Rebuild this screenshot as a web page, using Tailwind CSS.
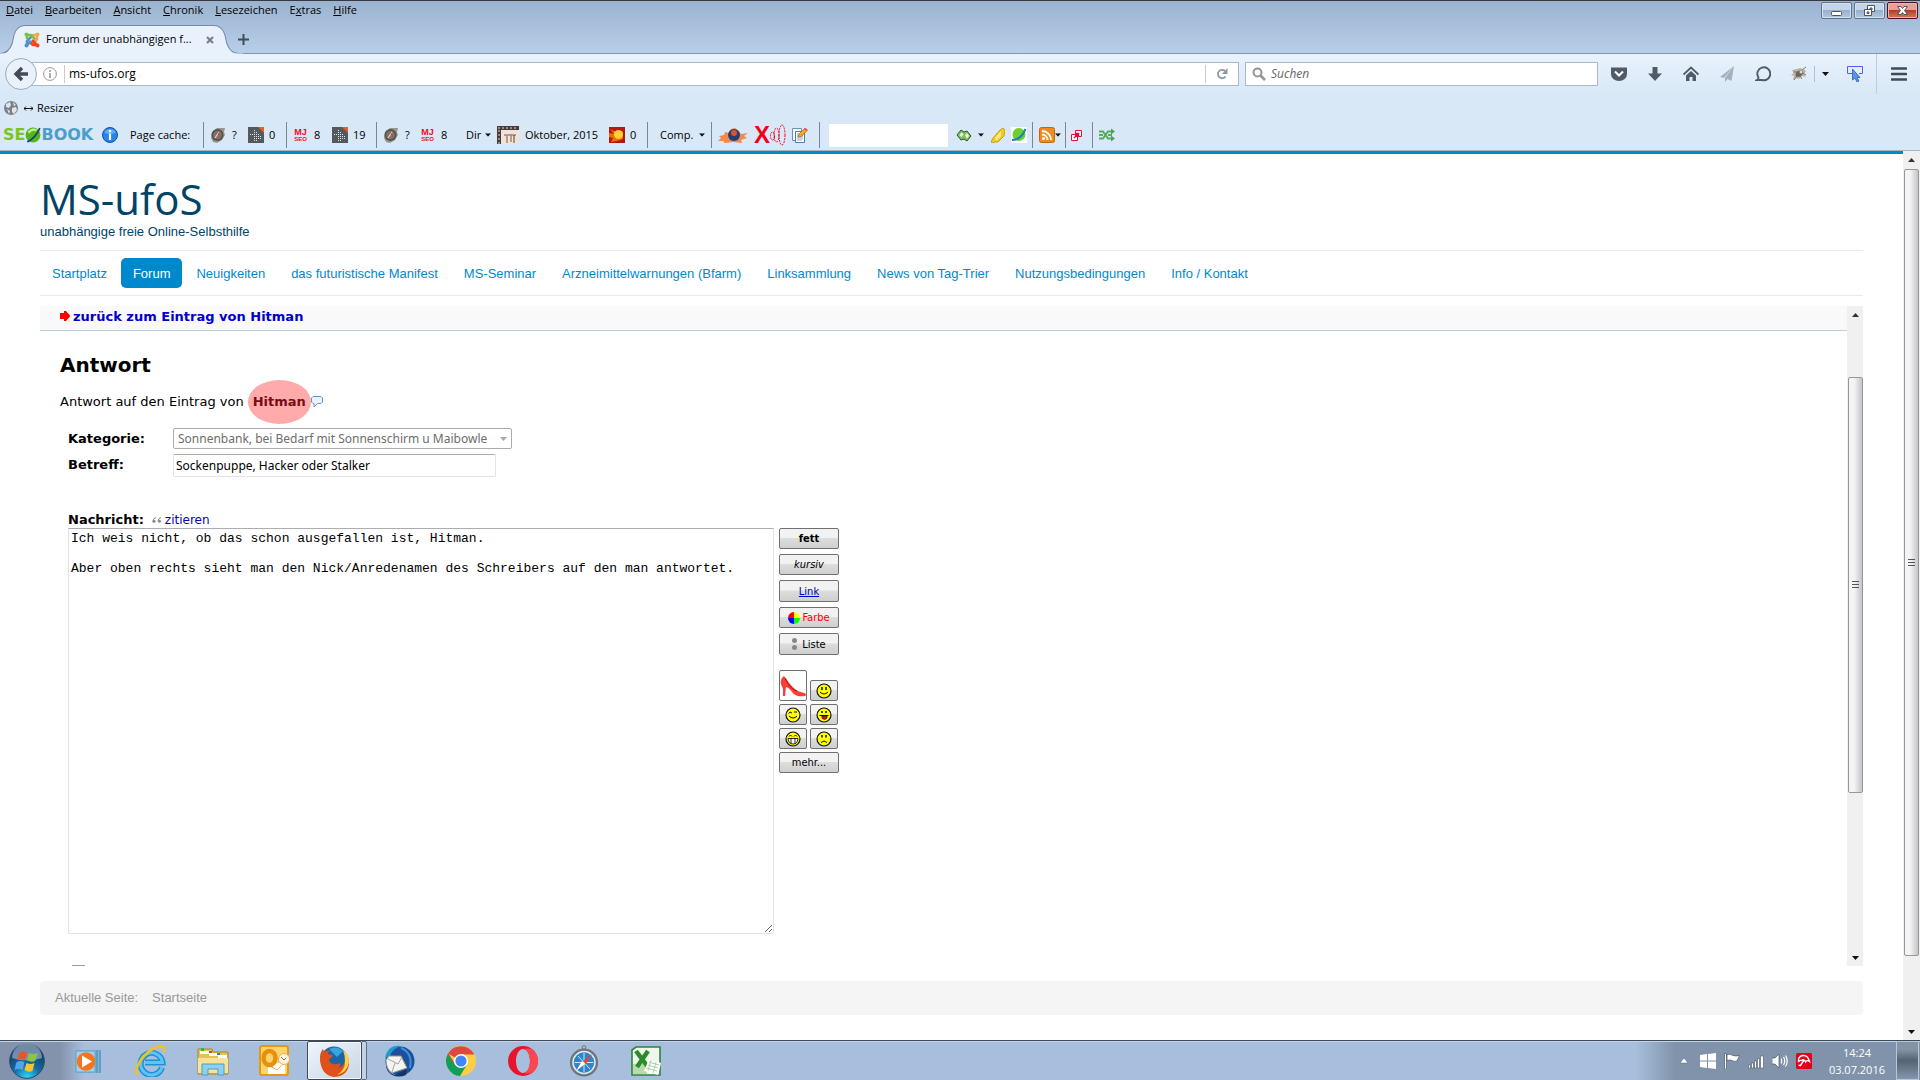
<!DOCTYPE html>
<html lang="de">
<head>
    <meta charset="UTF-8">
    <meta name="viewport" content="width=device-width, initial-scale=1.0">
    <title>Forum der unabhängigen freien Online-Selbsthilfe</title>
    <script src="https://cdn.jsdelivr.net/npm/@tailwindcss/browser@4"></script>
</head>
<body class="h-screen flex flex-col overflow-hidden bg-white text-black font-['Open_Sans','Noto_Sans',sans-serif] text-[11px]">

    <!-- Shared icons -->
    <svg class="hidden">
        <symbol id="caret" viewBox="0 0 7 4"><path d="M0 0h7L3.500 4z" fill="#111"/></symbol>
        <symbol id="gauge" viewBox="0 0 16 16">
            <path d="M1 11 2 5 7 1l8 0-1 4 1 3-3 5-5 3-4-1z" fill="#96968f"/>
            <circle cx="7.500" cy="8" r="6" fill="#55524c"/><circle cx="7.500" cy="8" r="4.300" fill="#857068"/>
            <path d="M5 11 9 5" fill="none" stroke="#ddd5cf" stroke-width="1.200"/><path d="M8 6l2 4" stroke="#b5493b"/>
        </symbol>
        <symbol id="dots" viewBox="0 0 16 16">
            <path d="M0 0h16v16H0z" fill="#53595d"/><path d="M10 0h6v6z" fill="#f15a24"/>
            <path d="M6.500 3v11M8.500 5v9M10.500 7v6M12.500 9v3M4.500 7v2M2.500 7v2" stroke="#e2e5e6" stroke-dasharray="1 1"/>
        </symbol>
        <symbol id="face" viewBox="0 0 16 16">
            <circle cx="8" cy="8" r="7" fill="#ff0" stroke="#111" stroke-width="1.200"/>
        </symbol>
    </svg>

    <header class="shrink-0 bg-[#d9e8f7]">
        <!-- Menu, window buttons and tabs -->
        <div class="h-[54px] border-t border-t-[#38383d] border-b border-b-[#7f98b5] bg-linear-to-b from-[#9ab3d0] to-[#b9cfe9]">
            <div class="flex h-6 justify-between">
                <nav class="flex h-[18px] items-center gap-3 pl-[6px]">
                    <a href="#"><u>D</u>atei</a>
                    <a href="#"><u>B</u>earbeiten</a>
                    <a href="#"><u>A</u>nsicht</a>
                    <a href="#"><u>C</u>hronik</a>
                    <a href="#"><u>L</u>esezeichen</a>
                    <a href="#">E<u>x</u>tras</a>
                    <a href="#"><u>H</u>ilfe</a>
                </nav>
                <div class="flex gap-[2px] pt-px pr-[2px]">
                    <button aria-label="Minimieren" class="grid h-[17px] w-[31px] place-items-center rounded-[2px] border border-[#5f7592] bg-linear-to-b from-[#c4d5e8] from-45% via-[#98b0cc] via-50% to-[#b4cae2] shadow-[inset_0_0_0_1px_#d4e2f0]">
                        <svg class="h-[13px] w-[13px]" viewBox="0 0 13 13"><rect x="1.500" y="7.500" width="10" height="4" rx="1" fill="#fff" stroke="#4c5566"/></svg>
                    </button>
                    <button aria-label="Verkleinern" class="grid h-[17px] w-[31px] place-items-center rounded-[2px] border border-[#5f7592] bg-linear-to-b from-[#c4d5e8] from-45% via-[#98b0cc] via-50% to-[#b4cae2] shadow-[inset_0_0_0_1px_#d4e2f0]">
                        <svg class="h-[13px] w-[13px]" viewBox="0 0 13 13"><path d="M4.500 1.500h7v6h-7z" fill="#fff" stroke="#4c5566"/><path d="M7 4h2v2H7z" fill="#8aa0bd" stroke="#4c5566"/><path d="M1.500 5.500h7v6h-7z" fill="#fff" stroke="#4c5566"/><path d="M4 8h2v1.500H4z" fill="#8aa0bd" stroke="#4c5566"/></svg>
                    </button>
                    <button aria-label="Schließen" class="grid h-[17px] w-[31px] place-items-center rounded-[2px] border border-[#4b1222] bg-linear-to-b from-[#e5a193] from-45% via-[#b93a24] via-50% to-[#d4785f] shadow-[inset_0_0_0_1px_#eab5aa]">
                        <svg class="h-[13px] w-[13px]" viewBox="0 0 13 13"><path d="M1.500 2.500h3.500l1.500 2 1.500-2h3.500L8.500 6.500l3 4H8l-1.500-2-1.500 2H1.500l3-4z" fill="#fff" stroke="#4c5566"/></svg>
                    </button>
                </div>
            </div>
            <div class="flex h-[29px] items-center">
                <div class="relative flex h-full w-[236px] items-center pl-6">
                    <svg class="absolute left-0 top-0 h-[29px] w-[243px]" viewBox="0 0 240 29" preserveAspectRatio="none">
                        <path d="M-1 28.500H0c7 0 10-4 12-10l2-9C16 3 19 .5 25 .5h186c6 0 9 3 11 9l2 9c2 6 5 10 13 10h3V30H-1z" fill="#e9f2fc" stroke="#6f8cad"/>
                        <path d="M0 29.500h240" stroke="#e9f2fc" stroke-width="2"/>
                    </svg>
                    <svg class="relative h-4 w-4" viewBox="0 0 16 16" fill="none" stroke-width="2.600">
                        <path d="M3 13V9l6-6" stroke="#5091cd"/><path d="M3 3h4l6 6" stroke="#7ac143"/><path d="M13 3v4l-6 6" stroke="#f9a541"/><path d="M13 13H9L6 10" stroke="#f44321"/><path d="M8 8l5 5" stroke="#f44321"/><path d="M3 7V3" stroke="#7ac143"/><path d="M9 3h4" stroke="#f9a541"/><path d="M3 13l4-4" stroke="#5091cd"/>
                        <g stroke="none"><circle cx="2.500" cy="2.500" r="2" fill="#7ac143"/><circle cx="13.500" cy="2.500" r="2" fill="#f9a541"/><circle cx="13.500" cy="13.500" r="2" fill="#f44321"/><circle cx="2.500" cy="13.500" r="2" fill="#5091cd"/></g>
                    </svg>
                    <span class="relative w-[166px] pl-[6px] whitespace-nowrap">Forum der unabhängigen f...</span>
                    <button aria-label="Tab schließen" class="relative"><svg class="h-2 w-2" viewBox="0 0 8 8"><path d="M1 1l6 6M7 1 1 7" stroke="#75818e" stroke-width="2.200"/></svg></button>
                </div>
                <button aria-label="Neuer Tab"><svg class="h-[11px] w-[13px] pl-[2px]" viewBox="0 0 11 11"><path d="M5.500 0v11M0 5.500h11" stroke="#3f4d5d" stroke-width="2"/></svg></button>
            </div>
        </div>

        <!-- Address bar -->
        <div class="flex h-10 items-center bg-linear-to-b from-[#e9f2fc] to-[#d9e8f7] pl-[5px]">
            <button aria-label="Zurück" class="z-10 grid h-8 w-8 shrink-0 place-items-center rounded-full border border-[#98abc0] bg-[#e9f2fb]">
                <svg class="h-4 w-4" viewBox="0 0 16 16"><path d="M9 2 3 8l6 6M3 8h12" fill="none" stroke="#434b57" stroke-width="3.400"/></svg>
            </button>
            <div class="-ml-4 flex h-6 flex-1 items-center border border-[#a6b9cd] bg-white pl-[21px]">
                <svg class="h-[14px] w-[14px]" viewBox="0 0 14 14"><circle cx="7" cy="7" r="6.400" fill="none" stroke="#999"/><path d="M7 6v5M7 3v2" stroke="#999" stroke-width="1.600"/></svg>
                <span class="ml-[7px] h-[18px] border-l border-[#ccc]"></span>
                <input aria-label="Adresse" value="ms-ufos.org" class="min-w-0 flex-1 pl-1 text-[12px] outline-none">
                <button aria-label="Neu laden" class="grid h-[18px] w-[33px] place-items-center border-l border-[#ccc]">
                    <svg class="h-3 w-3" viewBox="0 0 12 12"><path d="M9.500 8.500A4.200 4.200 0 1 1 9 3" fill="none" stroke="#8b98a6" stroke-width="1.800"/><path d="M11.500 0v6H6z" fill="#8b98a6"/></svg>
                </button>
            </div>
            <div class="ml-[6px] flex h-6 w-[353px] items-center border border-[#a6b9cd] bg-white pl-[6px]">
                <svg class="h-[14px] w-[14px]" viewBox="0 0 14 14"><circle cx="5.500" cy="5.500" r="4" fill="none" stroke="#959595" stroke-width="2"/><path d="m8.500 8.500 4.500 4.500" stroke="#959595" stroke-width="2.600"/></svg>
                <input aria-label="Suchen" placeholder="Suchen" class="min-w-0 flex-1 pl-[5px] text-[12px] outline-none placeholder:italic placeholder:text-[#666]">
            </div>
            <div class="flex h-full items-center pl-[13px]">
                <button aria-label="Pocket" class="w-9"><svg class="h-4 w-4" viewBox="0 0 16 16"><path d="M0 1.500h16V8a8 7 0 0 1-16 0z" fill="#4f5b68"/><path d="m4 5.500 4 4 4-4" fill="none" stroke="#fff" stroke-width="2"/></svg></button>
                <button aria-label="Downloads" class="w-9"><svg class="h-4 w-4" viewBox="0 0 16 16"><path d="M5.500 1h5v6.500H15L8 15 1 7.500h4.500z" fill="#4f5b68"/></svg></button>
                <button aria-label="Startseite" class="w-9"><svg class="h-4 w-4" viewBox="0 0 16 16"><path d="M.5 8.500 8 1.500l7.500 7" fill="none" stroke="#4f5b68" stroke-width="1.800"/><path d="m3 9.500 5-4.500 5 4.500V15h-3.500v-4h-3v4H3z" fill="#4f5b68"/></svg></button>
                <button aria-label="Teilen" class="w-9"><svg class="h-4 w-4" viewBox="0 0 16 16"><path d="M15 0 1 11l4 1zM15 0 6 12v4l2.500-3 4 2z" fill="#a4b0bd"/></svg></button>
                <button aria-label="Chat" class="w-9"><svg class="h-4 w-4" viewBox="0 0 16 16"><path d="M3.500 11.500A6.500 6.500 0 1 1 7 14H2c1-.6 1.500-1.300 1.500-2.500z" fill="none" stroke="#4f5b68" stroke-width="1.900"/></svg></button>
                <button aria-label="Firebug" class="w-[23px]"><svg class="h-4 w-4" viewBox="0 0 16 16"><path d="M1 4 6 3l3-1 3 1 3 2-2 3 2 3-4-1-3 3-3-1-3 2 1-4-3-1 3-2z" fill="#b9b3a6"/><path d="m2 6 4 0M11 4l4-3M12 7l3 2M6 10l-3 4M9 10l2 3" stroke="#777"/><path d="M5 7c2-3 6-3 7-1s-3 5-5 5-3-2-2-4" fill="#6b6556"/><circle cx="10" cy="6" r="1.500" fill="#ded9c0"/></svg></button>
                <button aria-label="Firebug Menü" class="grid h-4 w-[33px] place-items-start border-l border-[#b3c1cf] pt-[6px] pl-[7px]"><svg class="h-1 w-[7px]"><use href="#caret"/></svg></button>
                <button aria-label="Element wählen" class="w-[29px]"><svg class="h-4 w-4" viewBox="0 0 16 16"><path d="M5 7.500H.5v-7h15v7H12" fill="#e4edff" stroke="#3e6be0"/><path d="M5.500 3v11l2.500-2 2 4 2-1-2-3.500h3z" fill="#5e93e8" stroke="#2c5bb8" stroke-width=".8"/></svg></button>
                <button aria-label="Menü öffnen" class="grid h-full w-11 place-items-center border-l border-[#bfcddb]"><svg class="h-[14px] w-4" viewBox="0 0 16 14"><path d="M1 1.500h14M1 7h14M1 12.500h14" stroke="#3f4b59" stroke-width="2.600" stroke-linecap="round"/></svg></button>
            </div>
        </div>

        <!-- Bookmarks -->
        <div class="flex h-7 items-center pl-1">
            <a href="#" class="flex items-center gap-[6px]">
                <svg class="h-[14px] w-[14px]" viewBox="0 0 14 14"><circle cx="7" cy="7" r="7" fill="#7b8189"/><path d="M2 3l4-2 1 3-2 3-3-1zM8 7l4-1 1 3-3 4-2-2zM9 1l3 3-2 1zM3 8l3 2-1 3z" fill="#dfe5ea"/></svg>
                <span class="flex items-center gap-1"><svg class="h-[7px] w-[9px]" viewBox="0 0 9 7"><path d="M0 3.500h9M2 1.500l-2 2 2 2M7 1.500l2 2-2 2" fill="none" stroke="#111"/></svg>Resizer</span>
            </a>
        </div>

        <!-- SEO toolbar -->
        <div class="flex h-[29px] items-start border-b border-[#a8b4c0] pl-[3px]">
            <div class="flex h-[26px] w-[200px] items-center">
                <span class="flex w-[92px] items-center font-['DejaVu_Sans'] text-[16px] leading-4 font-bold"><span class="text-[#7dc51c]">SE</span><svg class="h-4 w-4 shrink-0" viewBox="0 0 14 14"><circle cx="7" cy="7" r="6.500" fill="#56b51c"/><path d="M3 5q3-4 7-2" stroke="#c3f08e" stroke-width="2" fill="none"/><path d="M2 13Q9 10 13 1" stroke="#16436c" stroke-width="1.500" fill="none"/></svg><span class="text-[#4d9dcc]">BOOK</span></span>
                <svg class="ml-[7px] h-4 w-4" viewBox="0 0 16 16"><circle cx="8" cy="8" r="7.500" fill="#2685e8" stroke="#1450a5"/><path d="M2.500 6Q3 2 8 2t5.500 4Q8 8 2.500 6" fill="#5fa9f2"/><path d="M8 6.500V13M8 3v2.200" stroke="#fff" stroke-width="2.200"/></svg>
                <span class="pl-3 whitespace-nowrap">Page cache:</span>
            </div>
            <div class="flex h-[26px] w-[83px] items-center border-l border-[#7d8790] pl-[6px]">
                <svg class="h-4 w-4"><use href="#gauge"/></svg><span class="w-[22px] pl-[6px]">?</span>
                <svg class="h-4 w-4"><use href="#dots"/></svg><span class="pl-[5px]">0</span>
            </div>
            <div class="flex h-[26px] w-[90px] items-center border-l border-[#7d8790] pl-[7px]">
                <span class="flex w-[13px] flex-col items-center font-['Liberation_Sans'] font-bold text-[#f00c1c]"><span class="text-[9px] leading-[8px]">MJ</span><span class="text-[6px] leading-[6px]">SEO</span></span><span class="w-[25px] pl-[7px]">8</span>
                <svg class="h-4 w-4"><use href="#dots"/></svg><span class="pl-[5px]">19</span>
            </div>
            <div class="flex h-[26px] w-[271px] items-center border-l border-[#7d8790] pl-[6px]">
                <svg class="h-4 w-4"><use href="#gauge"/></svg><span class="w-[22px] pl-[6px]">?</span>
                <span class="flex w-[13px] flex-col items-center font-['Liberation_Sans'] font-bold text-[#f00c1c]"><span class="text-[9px] leading-[8px]">MJ</span><span class="text-[6px] leading-[6px]">SEO</span></span><span class="w-8 pl-[7px]">8</span>
                <button class="flex w-[31px] items-center gap-1">Dir<svg class="h-1 w-[6px]" viewBox="0 0 7 4"><use href="#caret"/></svg></button>
                <svg class="h-[18px] w-[22px]" viewBox="0 0 22 18"><path d="M0 0h22v18H0z" fill="#efe4da"/><path d="M0 0h22v4H4v14H0z" fill="#4b3a35"/><path d="M1 2h20M2 4v14" stroke="#ddd" stroke-dasharray="2 2"/><path d="M7 9h12M10 9v8M14 8v8" stroke="#a98378" stroke-width="1.500"/><path d="M17 9v8" stroke="#5b4038"/></svg>
                <span class="w-[90px] pl-[6px] whitespace-nowrap">Oktober, 2015</span>
                <svg class="h-4 w-4" viewBox="0 0 16 16"><path d="M0 0h16v16H0z" fill="#b9150f"/><path d="m0 6 5 1-4-5 6 3 7 0v7l-6 2-6 1 2-4-4-1z" fill="#f06a0a"/><circle cx="9.500" cy="7.500" r="4.500" fill="#ffcf33"/></svg>
                <span class="pl-[5px]">0</span>
            </div>
            <div class="flex h-[26px] w-16 items-center border-l border-[#7d8790] pl-3">
                <button class="flex items-center gap-[6px]">Comp.<svg class="h-1 w-[6px]" viewBox="0 0 7 4"><use href="#caret"/></svg></button>
            </div>
            <div class="flex h-[26px] w-[108px] items-center border-l border-[#7d8790] pl-[6px]">
                <svg class="h-4 w-[30px] shrink-0" viewBox="0 0 30 16"><path d="M0 14 3 11 1 9l5-1 1-3 4 1 2-4 4-1 4 3 2 3 7-1-4 3 3 2-6 2 1 3-9-1-8 1-2-2z" fill="#f08a4e"/><circle cx="16" cy="8" r="6" fill="#243c78"/><circle cx="16" cy="6" r="3" fill="#d9542c"/></svg>
                <span class="ml-[6px] font-['Liberation_Sans'] text-[24px] leading-6 font-bold text-[#f0001c]">X</span>
                <svg class="h-[22px] w-4 shrink-0" viewBox="15 0 16 22"><g fill="none" stroke="#f0001c" stroke-dasharray="2 1"><ellipse cx="17.500" cy="12" rx="2" ry="4"/><ellipse cx="21.500" cy="11" rx="2.500" ry="7"/><ellipse cx="27" cy="11" rx="3" ry="10"/></g></svg>
                <svg class="ml-[6px] h-4 w-4 shrink-0" viewBox="0 0 16 16"><path d="M.5 1.500h9v12h-9z" fill="#f4f9ff" stroke="#6c8fbf"/><path d="M3.500 4.500h9v11h-9z" fill="#fff" stroke="#5578ae"/><path d="M5 7h6M5 9h6M5 11h6M5 13h5" stroke="#8aa6cf"/><path d="m6 10 1-3 6-6 2.500 2-6 6.500z" fill="#f6a623" stroke="#a9651b" stroke-width=".7"/><path d="m13 1 2.500 2-1 1.200L12 2z" fill="#e6504a"/></svg>
            </div>
            <div class="flex h-[26px] w-[213px] items-center border-l border-[#7d8790] pl-2">
                <input aria-label="Suchbegriff" class="h-[25px] w-[121px] rounded-[2px] border border-[#dfe4ea] bg-white">
                <svg class="ml-[7px] h-4 w-4" viewBox="0 0 16 16"><path d="m1 8 4-5 3 2 3-1 4 5-4 5-3-2-3 1z" fill="#82c05e" stroke="#2b5a24"/><path d="m3.500 8 2-2.500 2 1.500-2 3zM9 8.500l2-2.500 2 3-2 2.500z" fill="#eef7ea"/></svg>
                <svg class="ml-[6px] h-1 w-[6px]" viewBox="0 0 7 4"><use href="#caret"/></svg>
                <svg class="ml-[7px] h-4 w-[14px]" viewBox="0 0 14 16"><path d="m0 15 2-4 7-8 3-2 2 2-1 6-6 6H4l-3 1z" fill="#f7ca18" stroke="#b28408" stroke-width=".7"/><path d="m4 11 6-7 0 5-5 5" fill="#ffe98a"/></svg>
                <svg class="ml-[6px] h-4 w-4" viewBox="0 0 16 16"><path d="M0 0h16v16H0z" fill="#fff"/><circle cx="8" cy="7.500" r="6.500" fill="#6ed02a"/><path d="M1 13Q10 13 14.500 2" fill="none" stroke="#1c7fc4" stroke-width="2"/></svg>
            </div>
            <div class="flex h-[26px] w-[33px] items-center border-l border-[#7d8790] pl-[6px]">
                <svg class="h-4 w-4" viewBox="0 0 16 16"><rect x=".5" y=".5" width="15" height="15" rx="2" fill="#f08a24" stroke="#c4640f"/><circle cx="4.500" cy="11.500" r="1.500" fill="#fff"/><path d="M3 7.500a5.500 5.500 0 0 1 5.500 5.500M3 4a9 9 0 0 1 9 9" fill="none" stroke="#fff" stroke-width="1.800"/></svg>
                <svg class="h-1 w-[6px]" viewBox="0 0 7 4"><use href="#caret"/></svg>
            </div>
            <div class="flex h-[26px] w-[27px] items-center border-l border-[#7d8790] pl-[5px]">
                <svg class="h-[11px] w-[11px]" viewBox="0 0 11 11"><path d="M4.500.5h6v6h-6zM.5 4.500h6v6h-6z" fill="#fff" stroke="#d9143a"/><path d="m3 8 4-4M4.500 3.500H7.500V6.500" fill="none" stroke="#d9143a" stroke-width="1.400"/></svg>
            </div>
            <div class="flex h-[26px] items-center border-l border-[#7d8790] pl-[6px]">
                <svg class="h-[14px] w-4" viewBox="0 0 16 14"><path d="M0 3.500h4l5 7h4M0 10.500h4l5-7h4M0 7h4M9 7h4" fill="none" stroke="#55ad5c" stroke-width="2"/><path d="m12 .5 4 3-4 3zM12 7.500l4 3-4 3z" fill="#4aa352"/></svg>
            </div>
        </div>
    </header>

    <!-- Web page with its scrollbar -->
    <div class="flex min-h-0 flex-1 font-['Liberation_Sans',sans-serif] text-[13px]">
        <div class="flex min-w-0 flex-1 flex-col border-t-3 border-[#08c] px-10 pb-[25px]">
            <a href="#" class="block pt-[19px] text-[#046]">
                <span class="block font-['Open_Sans',sans-serif] text-[42px] leading-[51px]">MS-ufoS</span>
                <span class="block leading-4">unabhängige freie Online-Selbsthilfe</span>
            </a>
            <nav class="mt-[10px] flex gap-[2px] border-y border-[#e9e9e9] py-[7px] leading-[18px] text-[#08c]">
                <a href="#" class="px-3 pt-[7px] pb-[5px]">Startplatz</a>
                <a href="#" class="rounded-[5px] bg-[#08c] px-3 pt-[7px] pb-[5px] text-white">Forum</a>
                <a href="#" class="px-3 pt-[7px] pb-[5px]">Neuigkeiten</a>
                <a href="#" class="px-3 pt-[7px] pb-[5px]">das futuristische Manifest</a>
                <a href="#" class="px-3 pt-[7px] pb-[5px]">MS-Seminar</a>
                <a href="#" class="px-3 pt-[7px] pb-[5px]">Arzneimittelwarnungen (Bfarm)</a>
                <a href="#" class="px-3 pt-[7px] pb-[5px]">Linksammlung</a>
                <a href="#" class="px-3 pt-[7px] pb-[5px]">News von Tag-Trier</a>
                <a href="#" class="px-3 pt-[7px] pb-[5px]">Nutzungsbedingungen</a>
                <a href="#" class="px-3 pt-[7px] pb-[5px]">Info / Kontakt</a>
            </nav>

            <!-- Forum frame -->
            <div class="mt-[10px] flex min-h-0 flex-1 font-['DejaVu_Sans',sans-serif]">
                <main class="min-w-0 flex-1 overflow-hidden">
                    <div class="flex h-[25px] border-b border-[#b9cfe4] bg-[#f9f9f9] pl-5">
                        <a href="#" class="flex gap-[3px] leading-[22px] font-bold text-[#00c]">
                            <svg class="mt-[5px] h-[10px] w-[10px]" viewBox="0 0 10 10"><path d="M0 2h4V0h2l4 4.500v1L6 10H4V8H0z" fill="red"/></svg>
                            zurück zum Eintrag von Hitman
                        </a>
                    </div>
                    <div class="pl-5">
                        <h1 class="mt-5 text-[20px] leading-7 font-bold">Antwort</h1>
                        <p class="mt-[13px] flex h-5 items-center">
                            Antwort auf den Eintrag von
                            <span class="relative ml-[9px] font-bold text-[#7a0c14]"><span class="absolute -inset-x-[5px] -inset-y-3 rounded-[50%] bg-[#ffaaab]"></span><span class="relative">Hitman</span></span>
                            <svg class="relative ml-[5px] h-3 w-3" viewBox="0 0 12 12"><path d="M2 .5h8L11.500 2v4L10 7.500H6.500L3 11V7.500H2L.5 6V2z" fill="#eaf3fc" stroke="#6797ca"/></svg>
                        </p>
                    </div>
                    <form class="pl-7">
                        <div class="mt-4 flex h-[22px]">
                            <label for="kategorie" class="w-[105px] font-bold leading-[22px]">Kategorie:</label>
                            <div class="relative">
                                <select id="kategorie" disabled class="h-[21px] w-[339px] appearance-none rounded-[2px] border border-[#ababab] bg-white pl-1 font-['Noto_Sans',sans-serif] text-[12px] leading-[19px] text-[#6d6d6d] opacity-100">
                                    <option>Sonnenbank, bei Bedarf mit Sonnenschirm u Maibowle</option>
                                </select>
                                <svg class="absolute top-[9px] right-[5px] h-1 w-[7px]" viewBox="0 0 7 4"><path d="M0 0h7L3.500 4z" fill="#aaa"/></svg>
                            </div>
                        </div>
                        <div class="mt-1 flex">
                            <label for="betreff" class="w-[105px] font-bold leading-[22px]">Betreff:</label>
                            <input id="betreff" value="Sockenpuppe, Hacker oder Stalker" class="h-[23px] w-[323px] rounded-[2px] border border-[#e2e3ea] border-t-[#abadb3] pl-[2px] font-['Noto_Sans',sans-serif] text-[12px]">
                        </div>
                        <div class="mt-[34px] flex h-[17px] items-center">
                            <label for="nachricht" class="font-bold">Nachricht:</label>
                            <a href="#" class="ml-2 flex items-center gap-[3px] text-[12px] text-[#00c]">
                                <svg class="h-[6px] w-[10px]" viewBox="0 0 10 6"><path d="M4 .5Q1 1 1 4.500M9 .5Q6 1 6 4.500" fill="none" stroke="#888"/><circle cx="2" cy="4.300" r="1.500" fill="#888"/><circle cx="7.500" cy="4.300" r="1.500" fill="#888"/></svg>
                                zitieren
                            </a>
                        </div>
                        <div class="flex items-start gap-[5px]">
                            <textarea id="nachricht" rows="27" class="h-[406px] w-[706px] border border-[#e2e3ea] border-t-[#abadb3] px-[2px] pt-[2px] font-['Liberation_Mono',monospace] text-[13px] leading-[15px]">Ich weis nicht, ob das schon ausgefallen ist, Hitman.

Aber oben rechts sieht man den Nick/Anredenamen des Schreibers auf den man antwortet.</textarea>
                            <div class="w-[60px] text-[11px] leading-[19px] font-['DejaVu_Sans_Condensed','DejaVu_Sans']">
                                <div class="flex flex-col gap-[5px]">
                                    <button type="button" class="h-[21px] rounded-[2px] border border-[#707070] bg-linear-to-b from-[#f2f2f2] from-45% via-[#ddd] via-50% to-[#cfcfcf] font-bold">fett</button>
                                    <button type="button" class="h-[21px] rounded-[2px] border border-[#707070] bg-linear-to-b from-[#f2f2f2] from-45% via-[#ddd] via-50% to-[#cfcfcf] italic">kursiv</button>
                                    <button type="button" class="h-[22px] rounded-[2px] border border-[#707070] bg-linear-to-b from-[#f2f2f2] from-45% via-[#ddd] via-50% to-[#cfcfcf] text-[#00c] underline">Link</button>
                                    <button type="button" class="flex h-[21px] items-center justify-center gap-[2px] rounded-[2px] border border-[#707070] bg-linear-to-b from-[#f2f2f2] from-45% via-[#ddd] via-50% to-[#cfcfcf] text-[red]"><svg class="h-3 w-3" viewBox="0 0 12 12"><path d="M6 6V0a6 6 0 0 0-6 6z" fill="red"/><path d="M6 6h6a6 6 0 0 0-6-6z" fill="#ff0"/><path d="M6 6v6a6 6 0 0 0 6-6z" fill="#0f0"/><path d="M6 6H0a6 6 0 0 0 6 6z" fill="#00f"/></svg>Farbe</button>
                                    <button type="button" class="flex h-[22px] items-center justify-center gap-[5px] rounded-[2px] border border-[#707070] bg-linear-to-b from-[#f2f2f2] from-45% via-[#ddd] via-50% to-[#cfcfcf]"><svg class="h-3 w-[5px]" viewBox="0 0 5 12"><circle cx="2.500" cy="2.500" r="2.500" fill="#888"/><circle cx="2.500" cy="9.500" r="2.500" fill="#888"/></svg>Liste</button>
                                </div>
                                <div class="mt-[15px] grid grid-cols-[28px_28px] items-end gap-[3px]">
                                    <button type="button" aria-label="Schuh" class="grid h-[31px] place-items-center rounded-[2px] border border-[#707070] bg-white">
                                        <svg class="h-[22px] w-[26px]" viewBox="0 0 26 22"><path d="M4 1C1 3 0 7 1 9l2 5v7h2l1-9c5 1 6 8 12 9 3 .5 8 .5 8-1 0-3-5-2-8-4C12 13 8 6 4 1" fill="#fb3d35"/><path d="M5 3c3 6 6 11 12 13" fill="none" stroke="#9f1a16"/></svg>
                                    </button>
                                    <button type="button" aria-label="Lächeln" class="grid h-[21px] place-items-center rounded-[2px] border border-[#707070] bg-linear-to-b from-[#f2f2f2] from-45% via-[#ddd] via-50% to-[#cfcfcf]"><svg class="h-4 w-4" viewBox="0 0 16 16"><use href="#face"/><path d="M6 4v3M10 4v3" stroke="#111" stroke-width="1.500"/><path d="M4 9q4 4 8 0" fill="none" stroke="#111"/></svg></button>
                                    <button type="button" aria-label="Zwinkern" class="grid h-[21px] place-items-center rounded-[2px] border border-[#707070] bg-linear-to-b from-[#f2f2f2] from-45% via-[#ddd] via-50% to-[#cfcfcf]"><svg class="h-4 w-4" viewBox="0 0 16 16"><use href="#face"/><path d="M3.500 6.500Q5 4 7 6M9 5h3M4 9q4 4 8 0" fill="none" stroke="#111"/></svg></button>
                                    <button type="button" aria-label="Zunge" class="grid h-[21px] place-items-center rounded-[2px] border border-[#707070] bg-linear-to-b from-[#f2f2f2] from-45% via-[#ddd] via-50% to-[#cfcfcf]"><svg class="h-4 w-4" viewBox="0 0 16 16"><use href="#face"/><path d="M6 4v2M10 4v2" stroke="#111" stroke-width="1.500"/><path d="M3.500 8.500h9" stroke="#111"/><path d="M6 9h5v2q-2.500 3-5 0z" fill="#e0121b" stroke="#111" stroke-width=".7"/></svg></button>
                                    <button type="button" aria-label="Grinsen" class="grid h-[21px] place-items-center rounded-[2px] border border-[#707070] bg-linear-to-b from-[#f2f2f2] from-45% via-[#ddd] via-50% to-[#cfcfcf]"><svg class="h-4 w-4" viewBox="0 0 16 16"><use href="#face"/><path d="M4 5.500 5.500 4 7 5.500M9 5.500 10.500 4 12 5.500" fill="none" stroke="#111"/><path d="M3 7.500h10q-.5 5.500-5 5.500t-5-5.500zM6 7.500v5M10 7.500v5" fill="#fff" stroke="#111" stroke-width=".9"/></svg></button>
                                    <button type="button" aria-label="Traurig" class="grid h-[21px] place-items-center rounded-[2px] border border-[#707070] bg-linear-to-b from-[#f2f2f2] from-45% via-[#ddd] via-50% to-[#cfcfcf]"><svg class="h-4 w-4" viewBox="0 0 16 16"><use href="#face"/><path d="M6 4v2.500M10 4v2.500" stroke="#111" stroke-width="1.500"/><path d="M5 11.500q3-3 6 0" fill="none" stroke="#111"/></svg></button>
                                    <button type="button" class="col-span-2 h-[21px] w-[60px] rounded-[2px] border border-[#707070] bg-linear-to-b from-[#f2f2f2] from-45% via-[#ddd] via-50% to-[#cfcfcf]">mehr...</button>
                                </div>
                            </div>
                        </div>
                        <div class="mt-[31px] ml-1 w-[13px] border-t border-[#999]"></div>
                    </form>
                </main>
                <div class="flex w-4 flex-col items-center bg-[#f0f0f0]">
                    <div class="grid h-[71px] place-items-start pt-[7px]"><svg class="h-1 w-[7px]" viewBox="0 0 7 4"><path d="M0 4h7L3.500 0z" fill="#333"/></svg></div>
                    <div class="grid w-[15px] flex-1 place-items-center rounded-[2px] border border-[#979797] bg-linear-to-r from-[#f4f4f5] from-40% to-[#c4c4ca]">
                        <svg class="h-2 w-[7px]" viewBox="0 0 7 8"><path d="M0 .5h7M0 3.500h7M0 6.500h7" stroke="#555"/></svg>
                    </div>
                    <div class="grid h-[173px] place-items-end pb-[6px]"><svg class="h-1 w-[7px]"><use href="#caret"/></svg></div>
                </div>
            </div>

            <footer class="mt-[15px] flex h-[34px] items-center gap-[14px] rounded-[4px] bg-[#f5f5f5] px-[15px] text-[#999]">
                <span>Aktuelle Seite:</span>
                <span>Startseite</span>
            </footer>
        </div>
        <div class="flex w-[17px] flex-col items-center bg-[#f0f0f0]">
            <div class="grid h-[18px] place-items-center"><svg class="h-1 w-[7px]" viewBox="0 0 7 4"><path d="M0 4h7L3.500 0z" fill="#333"/></svg></div>
            <div class="grid w-[15px] flex-1 place-items-center rounded-[2px] border border-[#979797] bg-linear-to-r from-[#f4f4f5] from-40% to-[#c4c4ca]">
                <svg class="h-2 w-[7px]" viewBox="0 0 7 8"><path d="M0 .5h7M0 3.500h7M0 6.500h7" stroke="#555"/></svg>
            </div>
            <div class="grid h-[84px] place-items-end pb-[6px]"><svg class="h-1 w-[7px]"><use href="#caret"/></svg></div>
        </div>
    </div>

    <!-- Taskbar -->
    <div class="flex h-10 shrink-0 items-center justify-between border-t border-[#3f4a58] bg-[linear-gradient(to_right,#8393ab_60px,#a7bfdc_84px,#a7bfdc_calc(100%-284px),#8193ab_calc(100%-245px))] shadow-[inset_0_1px_0_#c3d5e8]">
        <div class="flex h-full items-center">
            <button aria-label="Start" class="ml-[9px]">
                <svg class="h-9 w-9" viewBox="0 0 36 36">
                    <defs><radialGradient id="orb" cx=".5" cy="1" r=".9"><stop offset="0" stop-color="#2fe0ff"/><stop offset=".45" stop-color="#146ba3"/><stop offset="1" stop-color="#123a5e"/></radialGradient></defs>
                    <circle cx="18" cy="18" r="17.300" fill="url(#orb)" stroke="#24496b"/>
                    <path d="M3 15A15 15 0 0 1 33 15Q18 20 3 15" fill="#9fb6cb" opacity=".65"/>
                    <path d="M10 10q4-3 8-1l-2 8q-4-2-8 0z" fill="#e8552b"/><path d="M20 10q4 2 9 0l-3 8q-4 2-8-1z" fill="#8cc63c"/>
                    <path d="M7.500 19q4-2 8 0l-2 8q-4-2-8 0z" fill="#4fa5e8"/><path d="M17.500 20q4 2 8 0l-2 8q-4 2-8-1z" fill="#fcc42c"/>
                </svg>
            </button>
            <button aria-label="Media Player" class="ml-[30px]">
                <svg class="h-7 w-[28px]" viewBox="0 0 28 28"><path d="M0 3h26v23H0z" fill="#7fb6da"/><path d="M22 3v23M25 3v23" stroke="#3f87b4"/><path d="M1 4h19v21H1z" fill="#a7d0e8" stroke="#5fa0c8"/><circle cx="11" cy="14.500" r="9.300" fill="#f4751b"/><path d="m7 8.500 10 6-10 6z" fill="#fff"/></svg>
            </button>
            <button aria-label="Internet Explorer" class="ml-[32px]">
                <svg class="h-[32px] w-8" viewBox="0 0 32 32"><path d="M27 22.500A11 11 0 1 1 27.500 17.500H10" fill="none" stroke="#1f8fd6" stroke-width="6"/><path d="M27 22.500A11 11 0 1 1 27.500 17.500H10" fill="none" stroke="#5fc4f5" stroke-width="3"/><path d="M3 30C-3 26 8 7 22 2c6-2 8 0 7 5" fill="none" stroke="#f4c21c" stroke-width="2.600"/></svg>
            </button>
            <button aria-label="Explorer" class="ml-[30px]">
                <svg class="h-[30px] w-8" viewBox="0 0 32 30"><path d="M1 3h14l1 3h15v22H1z" fill="#e4c257" stroke="#a9852a"/><path d="M3 5h9v3H3zM12 7h9v3h-9zM21 9h9v3h-9z" fill="#fff"/><path d="M4 2h3v3H4z" fill="#2db34a"/><path d="M12 5h3v2h-3z" fill="#d6432d"/><path d="M20 7h3v2h-3z" fill="#2d7fd6"/><path d="M1 12h30v15H1z" fill="#f6e39a"/><path d="M5 29V18h22v11h-6v-6H11v6z" fill="#8fd0ec" stroke="#4a9dc6"/></svg>
            </button>
            <button aria-label="Outlook" class="ml-[30px]">
                <svg class="h-8 w-[32px]" viewBox="0 0 32 32"><rect x="1" y="1" width="28" height="29" rx="2" fill="#fbd56b" stroke="#e39a12" stroke-width="2"/><path d="m9 20 17-3v12H9z" fill="#fff"/><path d="m9 20 9 5 8-8" fill="none" stroke="#e2b254"/><ellipse cx="10.500" cy="13" rx="6" ry="7" fill="none" stroke="#e88f0c" stroke-width="4.500"/><circle cx="25" cy="14" r="5.500" fill="#fff3dd" stroke="#e9ae6d"/><path d="m22 12 3 3 2-2" fill="none" stroke="#8b6b4a"/></svg>
            </button>
            <div class="ml-[16px] flex h-[39px]">
                <button aria-label="Firefox" class="grid w-[55px] place-items-center rounded-[2px] border border-[#3c4a5c] bg-linear-to-br from-[#f1f5fa] to-[#c7d5e6] pr-[2px] shadow-[inset_0_0_0_1px_#f4f8fc]">
                    <svg class="h-8 w-8" viewBox="0 0 32 32"><circle cx="16" cy="15" r="13.500" fill="#1c65a8"/><path d="M11 4q8-4 14 2l-6 6z" fill="#38a4dc"/><path d="M2 12C2 8 4 5 5 4l1 3q3-2 6-1-2 1-2 3l5 1q-1 3-4 4 0 4 4 5 4 1 7-1 2 3-3 5 7-1 8-8 1-5-1-9 5 5 5 11 0 14-15 15Q2 30 2 12" fill="#e0501a"/><path d="M25 5q6 5 6 12-2 11-12 13 8-5 8-13 0-7-2-12" fill="#fbd43c"/></svg>
                </button>
                <div class="w-[5px] rounded-r-[2px] border-y border-r border-[#5a6a80] bg-[#c3d3e6]"></div>
            </div>
            <button aria-label="Thunderbird" class="ml-[16px]">
                <svg class="h-8 w-8" viewBox="0 0 32 32"><circle cx="17" cy="16" r="14.500" fill="#1c4f9c"/><path d="M2 13Q5-1 18 1q-9 3-11 10z" fill="#1e9ad0"/><path d="M18 3q12 5 9 20" fill="none" stroke="#3f8fd6" stroke-width="2"/><path d="M3 15 6 11l12 0 6 12-15 5q-6-4-6-13" fill="#f4f4f2" stroke="#98938c"/><path d="m5 14 10 5 4-7M9 27l3-9" fill="none" stroke="#a8a39b"/><path d="M3 20q2 8 9 10l12-6-1 6q-7 3-14 0-6-4-6-10" fill="#173463"/></svg>
            </button>
            <button aria-label="Chrome" class="ml-[31px]">
                <svg class="h-[30px] w-[30px]" viewBox="0 0 30 30"><circle cx="15" cy="15" r="15" fill="#ffcd42"/><path d="M15 15 2 7.500A15 15 0 0 1 28 8H15z" fill="#dc4a3e"/><path d="M2 7.500A15 15 0 0 0 14 30l7-11.500-12 0z" fill="#129d58"/><path d="M15 8h13M2 7.500 9 18.500" stroke="#dc4a3e"/><circle cx="15" cy="15" r="7" fill="#fff"/><circle cx="15" cy="15" r="5.600" fill="#4286f5"/></svg>
            </button>
            <button aria-label="Opera" class="ml-8">
                <svg class="h-[30px] w-[30px]" viewBox="0 0 30 30"><path fill-rule="evenodd" d="M15 0a15 15 0 1 0 0 30 15 15 0 0 0 0-30m0 3c4 0 7 5 7 12s-3 12-7 12-7-5-7-12 3-12 7-12" fill="#e8142c"/><path d="M15 3q5-1 9 0a15 15 0 0 1 0 24q-5 1-9 0c4 0 7-5 7-12S19 3 15 3" fill="#ff454f"/></svg>
            </button>
            <button aria-label="Safari" class="ml-[31px]">
                <svg class="h-8 w-[30px]" viewBox="0 0 30 32"><circle cx="15" cy="2.500" r="1.800" fill="none" stroke="#777"/><circle cx="15" cy="17.500" r="12.800" fill="#2e86c9" stroke="#6f757b" stroke-width="2.600"/><circle cx="15" cy="17.500" r="11" fill="none" stroke="#e4e9ee" stroke-width="1.500"/><path d="M15 8v19M5.500 17.500h19M9 11l12 13" stroke="#cfe6f7"/><path d="m23 9-6 10-3-3z" fill="#e2462d"/><path d="m7 26 6-10 3 3z" fill="#fff"/></svg>
            </button>
            <button aria-label="Excel" class="ml-[32px]">
                <svg class="h-[30px] w-[31px]" viewBox="0 0 31 30"><path d="M1 4 5 1h24v28H1z" fill="#eff6ec" stroke="#2a8440" stroke-width="1.600"/><path d="M2 18h14v10H2z" fill="#b7dca9"/><path d="m5 5 12 16M17 5 6 21" stroke="#2e8b2c" stroke-width="4.500"/><path d="m18 13 12 4-3 12-14-4z" fill="#fff"/><path d="m18 16 10 3M17 19l10 3M15 22l11 3M20 14l-3 11M25 16l-3 11" stroke="#a9cfa5"/></svg>
            </button>
        </div>
        <div class="flex h-full items-center text-white">
            <button aria-label="Ausgeblendete Symbole" class="mr-3"><svg class="h-[6px] w-2" viewBox="0 0 8 6"><path d="M0 5h8L4 0z" fill="#fff" stroke="#5b6a80" stroke-width=".5"/></svg></button>
            <div class="flex gap-2">
                <svg class="h-4 w-4" viewBox="0 0 16 16"><path d="m0 2 7-1v6.500H0zM8 1l8-1v7.500H8zM0 8.500h7V15l-7-1zM8 8.500h8V16l-8-1z" fill="#fff"/></svg>
                <svg class="h-4 w-4" viewBox="0 0 16 16"><path d="M.5.500h2V16h-2z" fill="#fff" stroke="#4a5666" stroke-width=".7"/><path d="M3 1.500q3-1 6 1 3 1 6.500 0L13 8q-3 1-5-.5-2-1-5 0z" fill="#fff" stroke="#4a5666" stroke-width=".7"/></svg>
                <svg class="h-4 w-4" viewBox="0 0 16 16" fill="#fff" stroke="#4a5666" stroke-width=".6"><path d="M.5 12h2v3h-2zM3.500 10h2v5h-2zM6.500 8h2v7h-2zM9.500 5.500h2V15h-2zM12.500 3h3v12h-3z"/></svg>
                <svg class="h-4 w-4" viewBox="0 0 16 16"><path d="M0 5h3l4-4v14l-4-4H0z" fill="#fff" stroke="#4a5666" stroke-width=".7"/><path d="M9 5.500q1.500 2.500 0 5M11.500 4q2.500 4 0 8M13.500 2.500q3.500 5.500 0 11" fill="none" stroke="#fff" stroke-width="1.200"/></svg>
                <svg class="h-4 w-4" viewBox="0 0 16 16"><rect width="16" height="16" rx="1.500" fill="#e2001a"/><path d="M2.500 9q-1-5 4-6.500Q12 2 13.500 8.500 11 6.500 9.500 9 8 5.500 5.500 7.500 3.500 7 2.500 9" fill="none" stroke="#fff" stroke-width="1.400"/><path d="m8 7-3.500 5.500q-1.500.5-1.500-1" fill="none" stroke="#fff" stroke-width="1.400"/></svg>
            </div>
            <div class="mr-[11px] ml-[17px] text-center text-[11px] leading-[17px]">
                <div>14:24</div>
                <div>03.07.2016</div>
            </div>
            <button aria-label="Desktop anzeigen" class="mr-px h-full w-[23px] border border-[#b9c6d6] bg-linear-to-b from-[#8593a6] from-20% via-[#566373] via-50% to-[#8497af]"></button>
        </div>
    </div>
</body>
</html>
